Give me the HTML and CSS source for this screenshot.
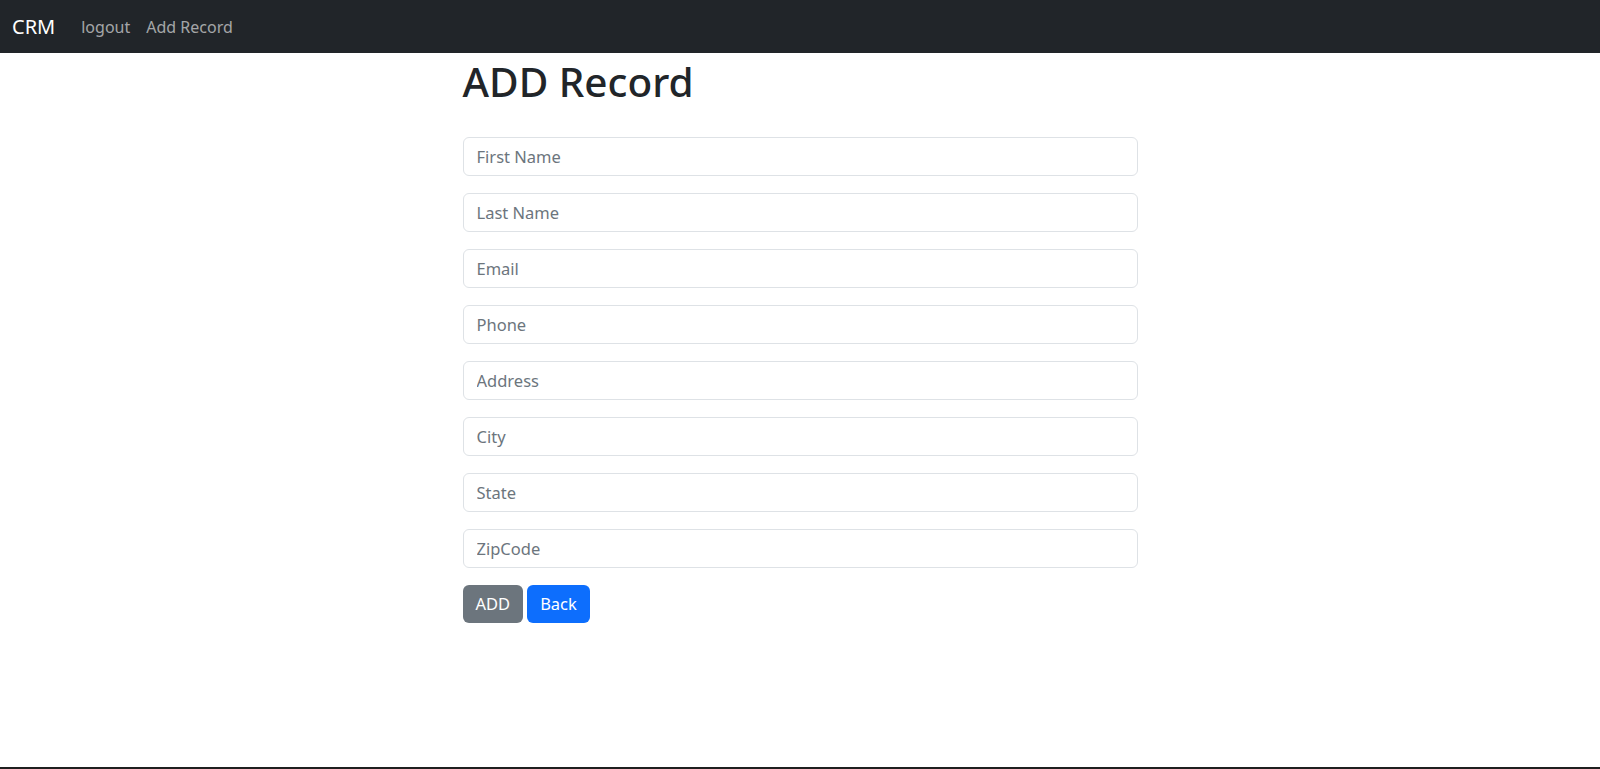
FILE: index.html
```html
<!DOCTYPE html>
<html lang="en">
<head>
<meta charset="utf-8">
<title>CRM - Add Record</title>
<link rel="stylesheet" href="styles.css">
</head>
<body>
<div class="page">
  <nav class="navbar">
    <a class="brand" href="#">CRM</a>
    <a class="nav-link" href="#">logout</a>
    <a class="nav-link" href="#">Add Record</a>
  </nav>
  <main class="container">
    <h1 class="title">ADD Record</h1>
    <form class="form">
      <input class="field" type="text" placeholder="First Name">
      <input class="field" type="text" placeholder="Last Name">
      <input class="field" type="text" placeholder="Email">
      <input class="field" type="text" placeholder="Phone">
      <input class="field" type="text" placeholder="Address">
      <input class="field" type="text" placeholder="City">
      <input class="field" type="text" placeholder="State">
      <input class="field" type="text" placeholder="ZipCode">
      <div class="actions">
        <button class="btn btn-secondary" type="button">ADD</button>
        <button class="btn btn-primary" type="button">Back</button>
      </div>
    </form>
  </main>
  <div class="bottom-line"></div>
</div>
</body>
</html>
```

FILE: styles.css
```css
* { box-sizing: border-box; }
html, body { margin: 0; padding: 0; }
body {
  font-family: "Noto Sans", "Open Sans", sans-serif;
  color: #212529;
  background: #fff;
}
.page {
  min-height: 100vh;
  display: flex;
  flex-direction: column;
}
.navbar {
  height: 53px;
  background: #212529;
  display: flex;
  align-items: center;
  padding: 0 12px;
  flex-shrink: 0;
}
.brand {
  color: #fff;
  text-decoration: none;
  font-size: 20px;
  margin-right: 26px;
}
.nav-link {
  color: rgba(255, 255, 255, 0.6);
  text-decoration: none;
  font-size: 16px;
  margin-right: 16px;
}
.container {
  width: 675px;
  margin: 0 auto;
  flex: 1;
}
.title {
  font-size: 40.5px;
  font-weight: 500;
  line-height: 1.2;
  margin: 5px 0 30px;
}
.form {
  display: flex;
  flex-direction: column;
  gap: 17px;
}
.field {
  display: block;
  width: 100%;
  height: 39px;
  padding: 0 13px;
  font-family: inherit;
  font-size: 16.5px;
  color: #212529;
  border: 1px solid #dee2e6;
  border-radius: 6px;
  outline: none;
}
.field::placeholder { color: #6c757d; }
.actions {
  display: flex;
  gap: 4px;
}
.btn {
  height: 38px;
  padding: 0 13px;
  border: none;
  border-radius: 6px;
  color: #fff;
  font-family: inherit;
  font-size: 16.5px;
}
.btn-secondary { background: #6c757d; }
.btn-primary { background: #0d6efd; }
.bottom-line {
  height: 2px;
  background: #1f1f1f;
  flex-shrink: 0;
}
```
